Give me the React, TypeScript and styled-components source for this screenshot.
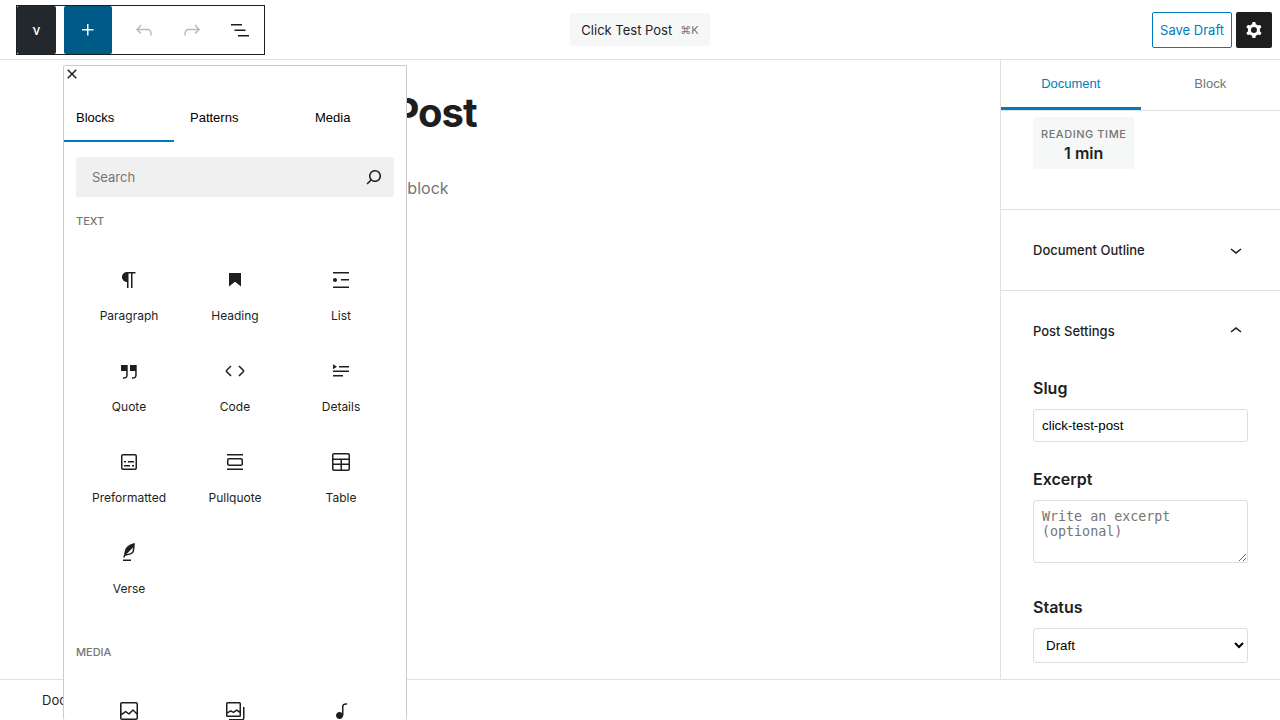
import React from "react";
import styled, { createGlobalStyle } from "styled-components";

const GlobalStyle = createGlobalStyle`
  *, *::before, *::after { box-sizing: border-box; }
  body {
    margin: 0;
    background: #fff;
    color: #1e1e1e;
    font-family: Inter, sans-serif;
    font-size: 13px;
    line-height: 20px;
  }
  button { cursor: pointer; }
`;

const ICONS = {
  plus: "M11 12.5V17.5H12.5V12.5H17.5V11H12.5V6H11V11H6V12.5H11Z",
  undo: "M18.3 11.7c-.6-.6-1.4-.9-2.3-.9H6.7l2.9-3.3-1.1-1-4.5 5L8.5 16l1-1-2.7-2.7H16c.5 0 .9.2 1.3.5 1 1 1 3.4 1 4.5v.3h1.5v-.2c0-1.5 0-4.3-1.5-5.7z",
  redo: "M15.6 6.5l-1.1 1 2.9 3.3H8c-.9 0-1.7.3-2.3.9-1.4 1.5-1.4 4.2-1.4 5.6v.2h1.5v-.3c0-1.1 0-3.5 1-4.5.3-.3.7-.5 1.3-.5h9.2L14.5 15l1.1 1.1 4.6-4.6-4.6-5z",
  listView: "M3 6h11v1.5H3V6Zm3.5 5.5h11V13h-11v-1.5ZM21 17H10v1.5h11V17Z",
  close: "M12 13.06l3.712 3.713 1.061-1.06L13.061 12l3.712-3.712-1.06-1.06L12 10.938 8.288 7.227l-1.061 1.06L10.939 12l-3.712 3.712 1.06 1.061L12 13.061z",
  search: "M13 5c-3.3 0-6 2.7-6 6 0 1.4.5 2.7 1.3 3.7l-3.8 3.8 1.1 1.1 3.8-3.8c1 .8 2.3 1.3 3.7 1.3 3.3 0 6-2.7 6-6S16.3 5 13 5zm0 10.5c-2.5 0-4.5-2-4.5-4.5s2-4.5 4.5-4.5 4.5 2 4.5 4.5-2 4.5-4.5 4.5z",
  cog: "M10.289 4.836A1 1 0 0111.275 4h1.306a1 1 0 01.987.836l.244 1.466c.787.26 1.503.679 2.108 1.218l1.393-.522a1 1 0 011.216.437l.653 1.13a1 1 0 01-.23 1.273l-1.148.944a6.025 6.025 0 010 2.435l1.149.946a1 1 0 01.23 1.272l-.653 1.13a1 1 0 01-1.216.437l-1.394-.522c-.605.54-1.32.958-2.108 1.218l-.244 1.466a1 1 0 01-.987.836h-1.306a1 1 0 01-.986-.836l-.244-1.466a5.995 5.995 0 01-2.108-1.218l-1.394.522a1 1 0 01-1.217-.436l-.653-1.131a1 1 0 01.23-1.272l1.149-.946a6.026 6.026 0 010-2.435l-1.148-.944a1 1 0 01-.23-1.272l.653-1.131a1 1 0 011.217-.437l1.393.522a5.994 5.994 0 012.108-1.218l.244-1.466zM14.929 12a3 3 0 11-6 0 3 3 0 016 0z",
  chevronDown: "M17.5 11.6L12 16l-5.5-4.4.9-1.2L12 14l4.5-3.6 1 1.2z",
  chevronUp: "M6.5 12.4L12 8l5.5 4.4-.9 1.2L12 10l-4.5 3.6-1-1.2z",
  paragraph: "m9.99609 14v-.2251l.00391.0001v6.225h1.5v-14.5h2.5v14.5h1.5v-14.5h3v-1.5h-8.50391c-2.76142 0-5 2.23858-5 5 0 2.7614 2.23858 5 5 5z",
  heading: "M6 5V18.5911L12 13.8473L18 18.5911V5H6Z",
  list: "M4 4v1.5h16V4H4zm8 8.5h8V11h-8v1.5zM4 20h16v-1.5H4V20zm4-8c0-1.1-.9-2-2-2s-2 .9-2 2 .9 2 2 2 2-.9 2-2z",
  quote: "M13 6v6h5.2v4c0 .8-.2 1.4-.5 1.7-.6.6-1.6.6-2.5.5h-.3v1.5h.5c1 0 2.3-.1 3.3-1 .6-.6 1-1.6 1-2.8V6H13zm-9 6h5.2v4c0 .8-.2 1.4-.5 1.7-.6.6-1.6.6-2.5.5h-.3v1.5h.5c1 0 2.3-.1 3.3-1 .6-.6 1-1.6 1-2.8V6H4v6z",
  code: "M20.8 10.7l-4.3-4.3-1.1 1.1 4.3 4.3c.1.1.1.3 0 .4l-4.3 4.3 1.1 1.1 4.3-4.3c.7-.8.7-1.9 0-2.6zM4.2 11.8l4.3-4.3-1-1-4.3 4.3c-.7.7-.7 1.8 0 2.5l4.3 4.3 1.1-1.1-4.3-4.3c-.2-.1-.2-.3-.1-.4z",
  details: "M4 16h10v1.5H4V16Zm0-4.5h16V13H4v-1.5ZM10 7h10v1.5H10V7ZM4 5.25l4 2.5-4 2.5v-5Z",
  preformatted: "M18 4H6c-1.1 0-2 .9-2 2v12c0 1.1.9 2 2 2h12c1.1 0 2-.9 2-2V6c0-1.1-.9-2-2-2zm.5 14c0 .3-.2.5-.5.5H6c-.3 0-.5-.2-.5-.5V6c0-.3.2-.5.5-.5h12c.3 0 .5.2.5.5v12zM7 16.5h6V15H7v1.5zm4-4h6V11h-6v1.5zM9 11H7v1.5h2V11zm6 5.5h2V15h-2v1.5z",
  pullquote: "M18 8H6c-1.1 0-2 .9-2 2v4c0 1.1.9 2 2 2h12c1.1 0 2-.9 2-2v-4c0-1.1-.9-2-2-2zm.5 6c0 .3-.2.5-.5.5H6c-.3 0-.5-.2-.5-.5v-4c0-.3.2-.5.5-.5h12c.3 0 .5.2.5.5v4zM4 4v1.5h16V4H4zm0 16h16v-1.5H4V20z",
  table: "M19 3H5c-1.1 0-2 .9-2 2v14c0 1.1.9 2 2 2h14c1.1 0 2-.9 2-2V5c0-1.1-.9-2-2-2zM5 4.5h14c.3 0 .5.2.5.5v3.5h-15V5c0-.3.2-.5.5-.5zm8 5.5h6.5v3.5H13V10zm-1.5 3.5h-7V10h7v3.5zm-7 5.5v-4h7v4.5H5c-.3 0-.5-.2-.5-.5zm14.5.5h-6V15h6.5v4c0 .3-.2.5-.5.5z",
  verse: "M17.8 2l-.9.3c-.1 0-3.6 1-5.2 2.1C10 5.5 9.3 6.5 8.9 7.1c-.6.9-1.7 4.7-1.7 6.3l-.9 2.3c-.2.4 0 .8.4 1 .1 0 .2.1.3.1.3 0 .6-.2.7-.5l.6-1.5c.3 0 .7-.1 1.2-.2.7-.1 1.4-.3 2.2-.5.8-.2 1.6-.5 2.4-.8.7-.3 1.4-.7 1.9-1.2s.8-1.2 1-1.9c.2-.7.3-1.6.4-2.4.1-.8.1-1.7.2-2.5 0-.8.1-1.5.2-2.1V2zm-1.9 5.6c-.1.8-.2 1.5-.3 2.1-.2.6-.4 1-.6 1.3-.3.3-.8.6-1.4.9-.7.3-1.4.5-2.2.8-.6.2-1.3.3-1.8.4L15 7.5c.3-.3.6-.7 1-1.1 0 .4 0 .8-.1 1.2zM6 20h8v-1.5H6V20z",
  image: "M19 3H5c-1.1 0-2 .9-2 2v14c0 1.1.9 2 2 2h14c1.1 0 2-.9 2-2V5c0-1.1-.9-2-2-2zM5 4.5h14c.3 0 .5.2.5.5v8.4l-3-2.9c-.3-.3-.8-.3-1 0L11.9 14 9 12c-.3-.2-.6-.2-.8 0l-3.6 2.6V5c-.1-.3.1-.5.4-.5zm14 15H5c-.3 0-.5-.2-.5-.5v-2.4l4.1-3 3 1.9c.3.2.7.2.9-.1L16 12l3.5 3.4V19c0 .3-.2.5-.5.5z",
  gallery: "M16.375 4.5H4.625a.125.125 0 0 0-.125.125v8.254l2.859-1.54a.75.75 0 0 1 .68-.016l2.384 1.142 2.89-2.074a.75.75 0 0 1 .874 0l2.313 1.66V4.625a.125.125 0 0 0-.125-.125Zm.125 9.398-2.75-1.975-2.813 2.02a.75.75 0 0 1-.76.067l-2.444-1.17L4.5 14.583v1.792c0 .069.056.125.125.125h11.75a.125.125 0 0 0 .125-.125v-2.477ZM4.625 3C3.728 3 3 3.728 3 4.625v11.75C3 17.273 3.728 18 4.625 18h11.75c.898 0 1.625-.727 1.625-1.625V4.625C18 3.728 17.273 3 16.375 3H4.625ZM20 8v11c0 .69-.31 1-.999 1H6v1.5h13.001c1.52 0 2.499-.982 2.499-2.5V8H20Z",
  audio: "M17.7 4.3c-1.2 0-2.8 0-3.8 1-.6.6-.9 1.5-.9 2.6V14c-.6-.6-1.5-1-2.5-1C8.6 13 7 14.6 7 16.5S8.6 20 10.5 20c1.5 0 2.8-1 3.3-2.3.5-.8.7-1.8.7-2.5V7.9c0-.7.2-1.2.5-1.6.6-.6 1.8-.6 2.8-.6h.3V4.3h-.4z",
};

type IconName = keyof typeof ICONS;

const EVEN_ODD: IconName[] = ["cog", "gallery"];

const Svg = styled.svg`
  display: block;
  flex: none;
  fill: currentColor;
`;

function Icon({ name, size = 24, viewBox = "0 0 24 24" }: { name: IconName; size?: number; viewBox?: string }) {
  return (
    <Svg width={size} height={size} viewBox={viewBox} aria-hidden="true">
      <path fillRule={EVEN_ODD.includes(name) ? "evenodd" : undefined} d={ICONS[name]} />
    </Svg>
  );
}

const Page = styled.div`
  position: relative;
  display: flex;
  flex-direction: column;
  height: 100vh;
  overflow: hidden;
`;

const Header = styled.header`
  display: grid;
  grid-template-columns: 1fr auto 1fr;
  align-items: center;
  height: 60px;
  flex: none;
  border-bottom: 1px solid #e0e0e0;
`;

const Toolbar = styled.div`
  display: flex;
  gap: 8px;
  justify-self: start;
  height: 50px;
  margin-left: 16px;
  border: 1px solid #1e1e1e;
`;

const ToolGroup = styled.div`
  display: flex;
`;

const Logo = styled.a`
  display: flex;
  align-items: center;
  justify-content: center;
  width: 39px;
  border-radius: 2px;
  background: #23282d;
  color: #fff;
  font-weight: 500;
  text-decoration: none;
`;

const ToolButton = styled.button<{ $primary?: boolean }>`
  display: flex;
  align-items: center;
  justify-content: center;
  width: 48px;
  padding: 0;
  border: 0;
  border-radius: 2px;
  background: ${(p) => (p.$primary ? "#005a87" : "transparent")};
  color: ${(p) => (p.$primary ? "#fff" : "#1e1e1e")};
  &:disabled { color: #bbb; cursor: default; }
`;

const TitleButton = styled.button`
  display: flex;
  align-items: center;
  gap: 8px;
  height: 33px;
  padding: 0 11px;
  border: 0;
  border-radius: 2px;
  background: #f6f7f7;
  color: #1e1e1e;
  font: 13px/20px Inter, sans-serif;
`;

const Shortcut = styled.kbd`
  color: #757575;
  font: 11px/20px Inter, sans-serif;
`;

const Actions = styled.div`
  display: flex;
  justify-self: end;
  gap: 4px;
  margin-right: 8px;
`;

const SaveButton = styled.button`
  height: 36px;
  padding: 0 7px;
  border: 1px solid #007cba;
  border-radius: 2px;
  background: #fff;
  color: #007cba;
  font: 13px/20px Inter, sans-serif;
`;

const SettingsButton = styled.button`
  display: flex;
  align-items: center;
  justify-content: center;
  width: 36px;
  height: 36px;
  padding: 0;
  border: 0;
  border-radius: 2px;
  background: #1e1e1e;
  color: #fff;
`;

const Body = styled.div`
  display: flex;
  flex: 1;
  min-height: 0;
`;

const Canvas = styled.main`
  flex: 1;
  min-width: 0;
  padding: 28px 24px;
`;

const Content = styled.article`
  max-width: 594px;
  margin: 0 auto;
`;

const PostTitle = styled.h1`
  margin: 0;
  font-size: 40px;
  font-weight: 700;
  line-height: 50px;
  letter-spacing: -1px;
`;

const Prompt = styled.p`
  margin: 38px 0 0;
  color: #757575;
  font-size: 16px;
  line-height: 24px;
`;

const Sidebar = styled.aside`
  display: flex;
  flex-direction: column;
  width: 280px;
  flex: none;
  border-left: 1px solid #e0e0e0;
`;

const SideTabs = styled.div`
  display: flex;
  height: 51px;
  flex: none;
  border-bottom: 1px solid #e0e0e0;
`;

const SideTab = styled.button<{ $active?: boolean }>`
  flex: 1;
  padding: 0 0 3px;
  border: 0;
  background: none;
  box-shadow: ${(p) => (p.$active ? "inset 0 -3px 0 #007cba" : "none")};
  color: ${(p) => (p.$active ? "#007cba" : "#757575")};
  font: 13px/20px "Liberation Sans", Arial, sans-serif;
`;

const SideScroll = styled.div`
  flex: 1;
  min-height: 0;
  overflow: hidden;
`;

const StatsSection = styled.section`
  padding: 6px 32px 40px;
`;

const Stat = styled.div`
  display: inline-flex;
  flex-direction: column;
  align-items: center;
  padding: 8px 8px 6px;
  border-radius: 2px;
  background: #f6f7f7;
  vertical-align: top;
`;

const StatLabel = styled.span`
  color: #757575;
  font-size: 11px;
  font-weight: 500;
  line-height: 18px;
  letter-spacing: 0.05em;
  text-transform: uppercase;
`;

const StatValue = styled.span`
  font-size: 16px;
  font-weight: 600;
  line-height: 20px;
`;

const PanelToggle = styled.button`
  display: flex;
  align-items: center;
  justify-content: space-between;
  width: 100%;
  height: 81px;
  padding: 0 32px;
  border: 0;
  border-top: 1px solid #e0e0e0;
  background: none;
  color: #1e1e1e;
  font: 500 13px/20px Inter, sans-serif;
`;

const Fields = styled.div`
  padding: 7px 32px 16px;
`;

const Field = styled.div`
  margin-bottom: 27px;
`;

const FieldLabel = styled.label`
  display: block;
  margin-bottom: 11px;
  font-size: 16px;
  font-weight: 600;
  line-height: 20px;
`;

const TextInput = styled.input`
  display: block;
  width: 100%;
  padding: 8px;
  border: 1px solid #ddd;
  border-radius: 3px;
  color: #000;
`;

const TextArea = styled.textarea`
  display: block;
  width: 100%;
  margin-bottom: 34px;
  padding: 8px;
  border: 1px solid #ddd;
  border-radius: 3px;
`;

const Select = styled.select`
  display: block;
  width: 100%;
  height: 35px;
  padding: 8px;
  border: 1px solid #ddd;
  border-radius: 3px;
  background: #fff;
  color: #000;
`;

const Footer = styled.footer`
  display: flex;
  align-items: center;
  height: 41px;
  flex: none;
  padding: 0 42px;
  border-top: 1px solid #e0e0e0;
`;

/* Popover that floats over the canvas, anchored below the inserter button. */
const Inserter = styled.div`
  position: absolute;
  top: 65px;
  bottom: 0;
  left: 63px;
  width: 344px;
  overflow: hidden;
  border: 1px solid #ccc;
  border-bottom: 0;
  border-radius: 2px;
  background: #fff;
`;

const CloseButton = styled.button`
  display: block;
  padding: 0;
  border: 0;
  background: none;
  color: #1e1e1e;
`;

const InserterTabs = styled.div`
  display: grid;
  grid-template-columns: 110px 121px 1fr;
  gap: 4px;
  margin-top: 12px;
`;

const InserterTab = styled.button<{ $active?: boolean }>`
  height: 48px;
  padding: 0 12px;
  border: 0;
  background: none;
  box-shadow: ${(p) => (p.$active ? "inset 0 -2px 0 #007cba" : "none")};
  color: #000;
  font: 13px/20px "Liberation Sans", Arial, sans-serif;
  text-align: left;
`;

const InserterBody = styled.div`
  padding: 15px 12px 0;
`;

const SearchBox = styled.div`
  display: flex;
  align-items: center;
  height: 40px;
  padding: 0 8px 0 16px;
  border-radius: 2px;
  background: #f0f0f0;
`;

const SearchInput = styled.input`
  flex: 1;
  min-width: 0;
  padding: 0;
  border: 0;
  outline: 0;
  background: none;
  font: 13px/20px Inter, sans-serif;
  &::placeholder { color: #757575; }
`;

const Category = styled.section`
  padding: 16px 0 12px;
`;

const CategoryTitle = styled.h2`
  margin: 0 0 23px;
  color: #757575;
  font-size: 11px;
  font-weight: 500;
  line-height: 16px;
  text-transform: uppercase;
`;

const BlockGrid = styled.div`
  display: grid;
  grid-template-columns: repeat(3, 1fr);
`;

const BlockButton = styled.button`
  display: flex;
  flex-direction: column;
  align-items: center;
  gap: 16px;
  padding: 16px 0 19px;
  border: 0;
  background: none;
  color: #1e1e1e;
  font: 12px/16px Inter, sans-serif;
`;

type Block = { icon: IconName; label: string };

const TEXT_BLOCKS: Block[] = [
  { icon: "paragraph", label: "Paragraph" },
  { icon: "heading", label: "Heading" },
  { icon: "list", label: "List" },
  { icon: "quote", label: "Quote" },
  { icon: "code", label: "Code" },
  { icon: "details", label: "Details" },
  { icon: "preformatted", label: "Preformatted" },
  { icon: "pullquote", label: "Pullquote" },
  { icon: "table", label: "Table" },
  { icon: "verse", label: "Verse" },
];

const MEDIA_BLOCKS: Block[] = [
  { icon: "image", label: "Image" },
  { icon: "gallery", label: "Gallery" },
  { icon: "audio", label: "Audio" },
];

function BlockCategory({ title, blocks }: { title: string; blocks: Block[] }) {
  return (
    <Category>
      <CategoryTitle>{title}</CategoryTitle>
      <BlockGrid>
        {blocks.map((b) => (
          <BlockButton key={b.label} type="button">
            <Icon name={b.icon} />
            <span>{b.label}</span>
          </BlockButton>
        ))}
      </BlockGrid>
    </Category>
  );
}

export default function App() {
  return (
    <Page>
      <GlobalStyle />
      <Header>
        <Toolbar role="toolbar" aria-label="Document tools">
          <Logo href="#">ν</Logo>
          <ToolButton type="button" $primary aria-label="Toggle block inserter"><Icon name="plus" /></ToolButton>
          <ToolGroup>
            <ToolButton type="button" disabled aria-label="Undo"><Icon name="undo" /></ToolButton>
            <ToolButton type="button" disabled aria-label="Redo"><Icon name="redo" /></ToolButton>
            <ToolButton type="button" aria-label="Document overview"><Icon name="listView" /></ToolButton>
          </ToolGroup>
        </Toolbar>
        <TitleButton type="button">
          Click Test Post
          <Shortcut>⌘K</Shortcut>
        </TitleButton>
        <Actions>
          <SaveButton type="button">Save Draft</SaveButton>
          <SettingsButton type="button" aria-label="Settings"><Icon name="cog" /></SettingsButton>
        </Actions>
      </Header>

      <Body>
        <Canvas>
          <Content>
            <PostTitle>Click Test Post</PostTitle>
            <Prompt>Type or click / to choose a block</Prompt>
          </Content>
        </Canvas>
        <Sidebar>
          <SideTabs role="tablist">
            <SideTab type="button" role="tab" aria-selected $active>Document</SideTab>
            <SideTab type="button" role="tab" aria-selected={false}>Block</SideTab>
          </SideTabs>
          <SideScroll>
            <StatsSection>
              <Stat>
                <StatLabel>Reading time</StatLabel>
                <StatValue>1 min</StatValue>
              </Stat>
            </StatsSection>
            <PanelToggle type="button" aria-expanded={false}>
              Document Outline
              <Icon name="chevronDown" />
            </PanelToggle>
            <PanelToggle type="button" aria-expanded>
              Post Settings
              <Icon name="chevronUp" />
            </PanelToggle>
            <Fields>
              <Field>
                <FieldLabel htmlFor="slug">Slug</FieldLabel>
                <TextInput id="slug" type="text" defaultValue="click-test-post" />
              </Field>
              <FieldLabel htmlFor="excerpt">Excerpt</FieldLabel>
              <TextArea id="excerpt" rows={3} placeholder="Write an excerpt (optional)" />
              <FieldLabel htmlFor="status">Status</FieldLabel>
              <Select id="status" defaultValue="draft">
                <option value="draft">Draft</option>
                <option value="publish">Published</option>
              </Select>
            </Fields>
          </SideScroll>
        </Sidebar>
      </Body>

      <Footer>Document</Footer>

      <Inserter role="dialog" aria-label="Block library">
        <CloseButton type="button" aria-label="Close block inserter">
          <Icon name="close" size={16} viewBox="4 4 16 16" />
        </CloseButton>
        <InserterTabs role="tablist">
          <InserterTab type="button" role="tab" aria-selected $active>Blocks</InserterTab>
          <InserterTab type="button" role="tab" aria-selected={false}>Patterns</InserterTab>
          <InserterTab type="button" role="tab" aria-selected={false}>Media</InserterTab>
        </InserterTabs>
        <InserterBody>
          <SearchBox>
            <SearchInput type="text" placeholder="Search" aria-label="Search" />
            <Icon name="search" />
          </SearchBox>
          <BlockCategory title="Text" blocks={TEXT_BLOCKS} />
          <BlockCategory title="Media" blocks={MEDIA_BLOCKS} />
        </InserterBody>
      </Inserter>
    </Page>
  );
}
